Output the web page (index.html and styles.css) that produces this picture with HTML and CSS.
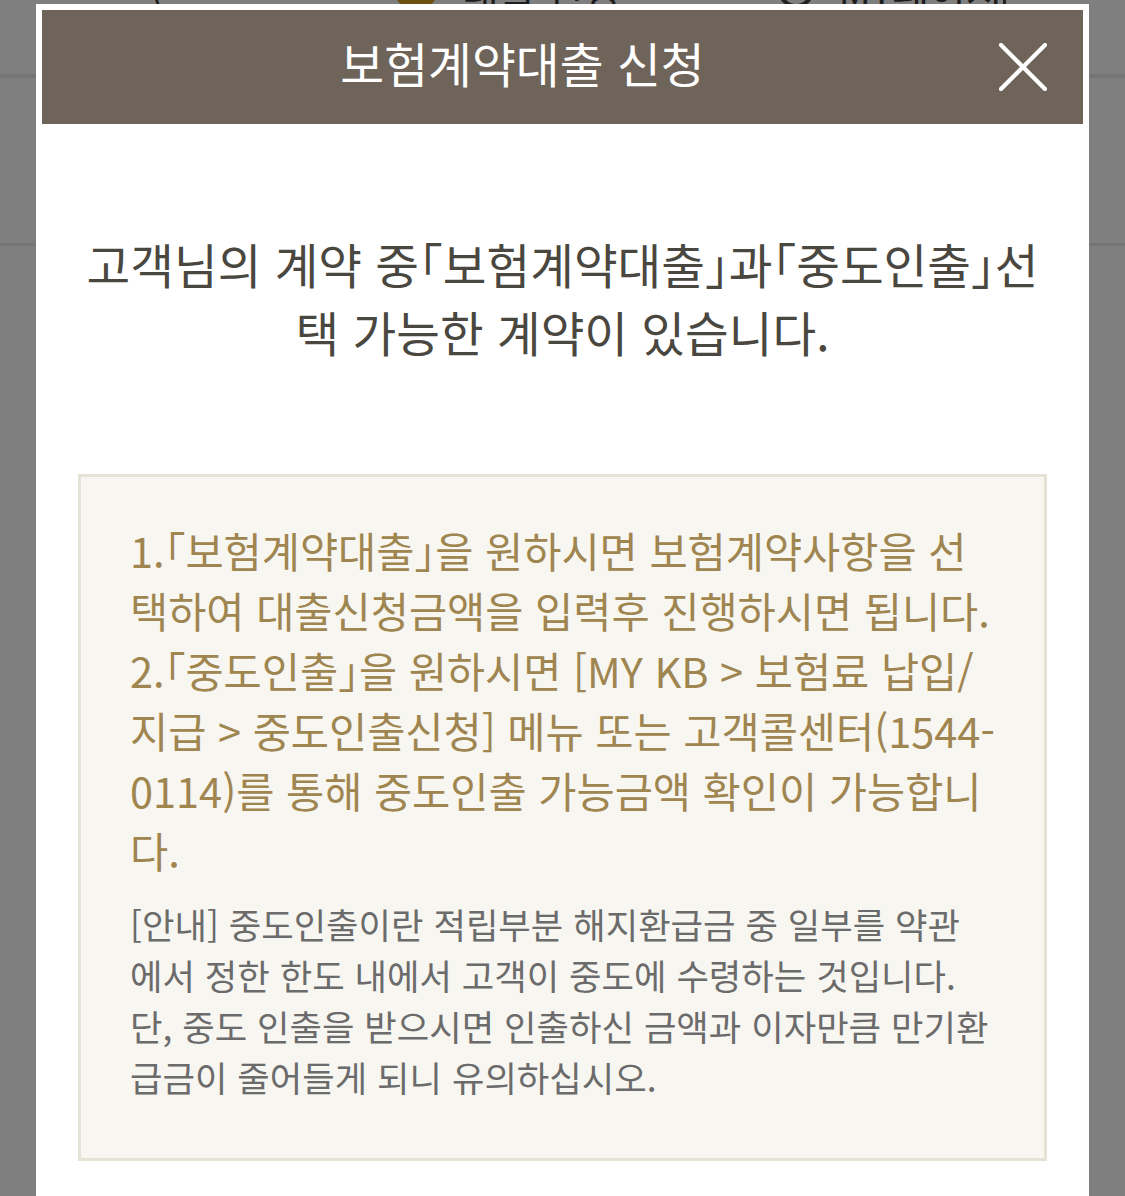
FILE: index.html
```html
<!DOCTYPE html>
<html lang="ko">
<head>
<meta charset="utf-8">
<title>보험계약대출 신청</title>
<link rel="stylesheet" href="styles.css">
</head>
<body>
<div class="page">
  <div class="topbar">
    <span class="tb-back">(</span>
    <span class="tb-icon"></span>
    <span class="tb-text">대출 신청</span>
    <span class="tb-spacer"></span>
    <span class="tb-circle"></span>
    <span class="tb-text">MY페이지</span>
    <span class="tb-bar"></span>
  </div>
  <div class="gnb"></div>
  <div class="section"></div>
</div>
<div class="overlay"></div>
<div class="modal">
  <div class="modal-head">
    <h1 class="modal-title">보험계약대출 신청</h1>
    <button class="close" type="button" aria-label="닫기">
      <svg viewBox="0 0 48 48" width="48" height="48"><path d="M2 2 L46 46 M46 2 L2 46" stroke="#fff" stroke-width="4.2" stroke-linecap="round" fill="none"/></svg>
    </button>
  </div>
  <div class="modal-body">
    <p class="lead">고객님의 계약 중<span class="br">「</span>보험계약대출<span class="br">」</span>과<span class="br">「</span>중도인출<span class="br">」</span>선택 가능한 계약이 있습니다.</p>
    <div class="info">
      <p class="item">1.<span class="br">「</span>보험계약대출<span class="br">」</span>을 원하시면 보험계약사항을 선택하여 대출신청금액을 입력후 진행하시면 됩니다.</p>
      <p class="item">2.<span class="br">「</span>중도인출<span class="br">」</span>을 원하시면 [MY KB &gt; 보험료 납입/지급 &gt; 중도인출신청] 메뉴 또는 고객콜센터(1544-0114)를 통해 중도인출 가능금액 확인이 가능합니다.</p>
      <p class="note">[안내] 중도인출이란 적립부분 해지환급금 중 일부를 약관에서 정한 한도 내에서 고객이 중도에 수령하는 것입니다. 단, 중도 인출을 받으시면 인출하신 금액과 이자만큼 만기환급금이 줄어들게 되니 유의하십시오.</p>
    </div>
  </div>
</div>
</body>
</html>
```

FILE: styles.css
```css
html, body {
  margin: 0;
  padding: 0;
  background: #ffffff;
  font-family: "Noto Sans CJK KR", "Noto Sans", sans-serif;
  overflow: hidden;
  height: 100%;
}

.page {
  background: #ffffff;
}

.topbar {
  height: 16px;
  display: flex;
  align-items: flex-end;
  gap: 24px;
  padding: 0 20px 0 150px;
  font-size: 40px;
  line-height: 40px;
  color: #3a3a3a;
}
.topbar > * {
  flex: none;
}
.tb-back {
  width: 40px;
  margin-bottom: 8px;
}
.tb-icon {
  width: 44px;
  height: 40px;
  margin-left: 180px;
  margin-bottom: 6px;
  background: #e0a020;
  border-radius: 50%;
}
.tb-text {
  margin-bottom: 6px;
}
.tb-spacer {
  width: 110px;
}
.tb-circle {
  width: 28px;
  height: 28px;
  border: 4px solid #444;
  border-radius: 50%;
  margin-bottom: 8px;
}
.tb-bar {
  width: 3px;
  height: 40px;
  background: #444;
  margin-left: -24px;
  margin-bottom: -2px;
}

.gnb {
  height: 58px;
  border-bottom: 4px solid #eaeaea;
}
.section {
  height: 165px;
  border-bottom: 3px solid #eaeaea;
}

.overlay {
  position: fixed;
  inset: 0;
  background: rgba(0, 0, 0, 0.5);
}

.modal {
  position: fixed;
  left: 36px;
  top: 4px;
  width: 1053px;
  height: 1300px;
  box-sizing: border-box;
  padding: 6px;
  background: #ffffff;
}

.modal-head {
  position: relative;
  height: 114px;
  background: #6f645a;
  display: flex;
  align-items: center;
}
.modal-title {
  flex: 1;
  margin: -9px 0 0;
  padding-right: 80px;
  text-align: center;
  color: #ffffff;
  font-size: 47.7px;
  font-weight: 400;
  line-height: 60px;
}
.close {
  position: absolute;
  right: 36px;
  top: 33px;
  width: 48px;
  height: 48px;
  padding: 0;
  border: 0;
  background: none;
  display: block;
}
.close svg {
  display: block;
}

.modal-body {
  padding: 0 36px;
}

.br {
  font-feature-settings: "halt";
}

.lead {
  margin: 106px 0 0;
  padding: 0 5px;
  text-align: center;
  font-size: 47.5px;
  line-height: 68px;
  color: #4a4740;
}

.info {
  margin-top: 108px;
  border: 3px solid #e5e2d6;
  background: #f8f6f1;
  padding: 43px 49px 56px;
}
.item {
  margin: 0;
  font-size: 41.5px;
  line-height: 60px;
  color: #9f8550;
}
.note {
  margin: 18px 5px 0 0;
  font-size: 35.3px;
  line-height: 51px;
  color: #6b6b6b;
}
```
